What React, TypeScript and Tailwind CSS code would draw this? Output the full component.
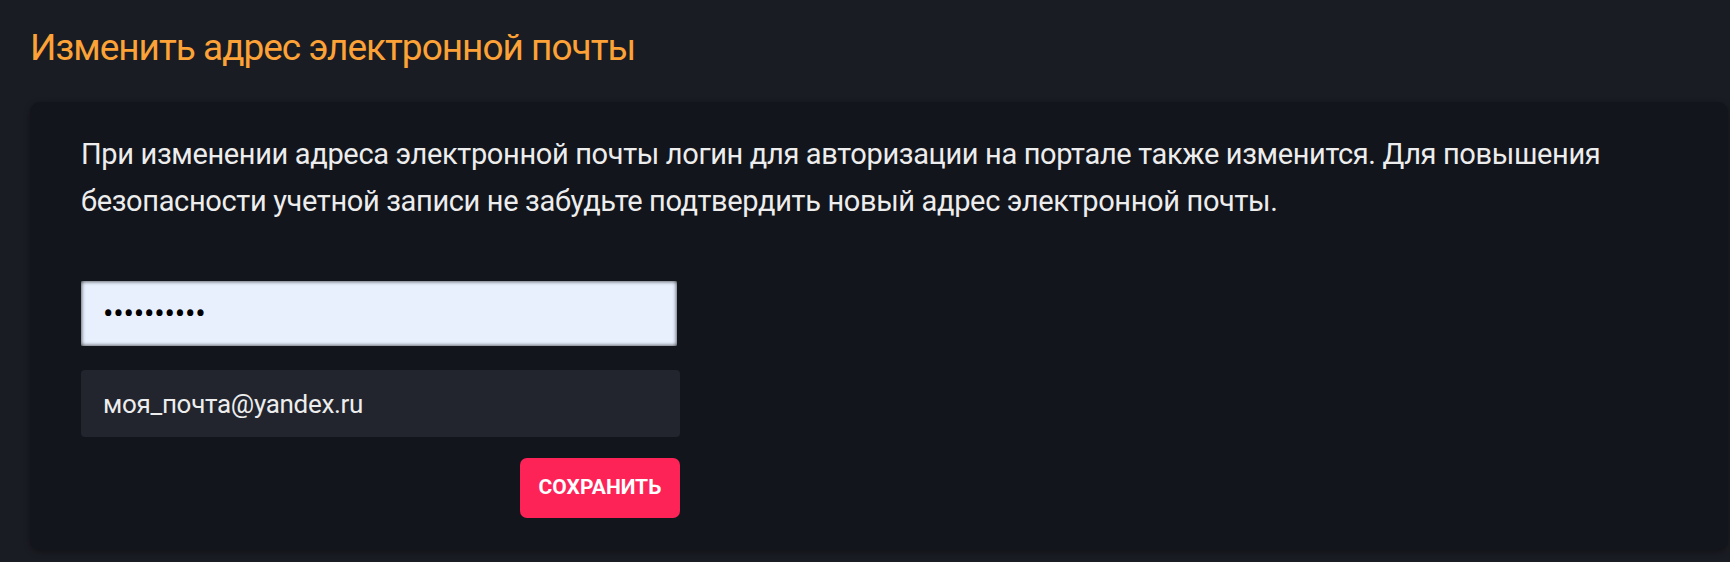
export default function App() {
  return (
    <div className="min-h-screen bg-[#1a1c23] pl-[30px] pr-[2px] pt-[24px] font-['Roboto',sans-serif]">
      <h1 className="text-[37px] leading-[48px] font-normal tracking-[-1px] text-[#fca236]">
        Изменить адрес электронной почты
      </h1>

      <div className="mt-[30px] rounded-[10px] bg-[#13151c] pl-[51px] pr-[40px] pt-[29px] pb-[32px] shadow-[0_2px_6px_rgba(0,0,0,0.35)]">
        <p className="text-[29px] leading-[47px] tracking-[-0.35px] text-[#ededed]">
          При изменении адреса электронной почты логин для авторизации на портале также изменится. Для повышения
          <br />
          безопасности учетной записи не забудьте подтвердить новый адрес электронной почты.
        </p>

        <form className="mt-[56px] flex w-[599px] flex-col" onSubmit={(e) => e.preventDefault()}>
          <input
            type="password"
            readOnly
            defaultValue="1234567890"
            className="h-[65px] w-[596px] rounded-[2px] bg-[#e8f0fe] px-[22px] text-[31px] tracking-[-0.2px] text-black shadow-[inset_0_0_4px_rgba(0,0,0,0.85)] outline-none"
          />
          <input
            type="email"
            readOnly
            defaultValue="моя_почта@yandex.ru"
            className="mt-[24px] h-[67px] w-full rounded-[4px] bg-[#22252e] px-[22px] text-[26px] tracking-[-0.3px] text-[#ededed] outline-none"
          />
          <button
            type="submit"
            className="mt-[21px] h-[60px] w-[160px] self-end rounded-[7px] bg-[#fe2357] text-[21px] font-bold uppercase text-white"
          >
            Сохранить
          </button>
        </form>
      </div>
    </div>
  );
}
